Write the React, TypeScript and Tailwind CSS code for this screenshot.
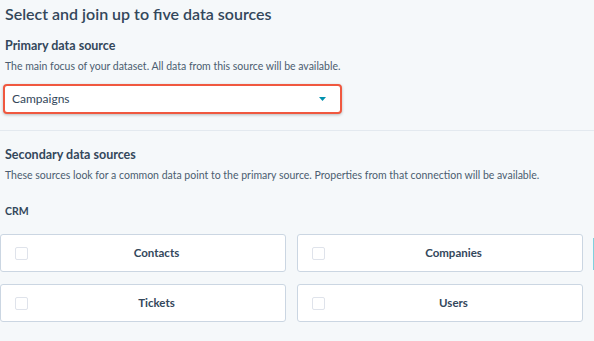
import React from 'react';

const crmSources = ['Contacts', 'Companies', 'Tickets', 'Users'];

const SourceCard: React.FC<{ label: string }> = ({ label }) => (
  <div className="flex h-[38px] items-center rounded-[3px] border border-[#cbd6e2] bg-white pl-[14px]">
    <span className="h-[13px] w-[13px] shrink-0 rounded-[2px] border border-[#dfe3eb] bg-white" />
    <span className="flex-1 text-center text-[11.5px] font-bold text-[#33475b]">{label}</span>
  </div>
);

export default function App() {
  return (
    <div
      className="h-[341px] w-[594px] overflow-hidden bg-[#f5f8fa] text-[#33475b]"
      style={{ fontFamily: 'Lato, "Open Sans", sans-serif' }}
    >
      <div className="px-[5px] pt-[3px]">
        <h1 className="text-[16px] font-semibold leading-[22px]">Select and join up to five data sources</h1>
        <h2 className="mt-[13px] text-[12.5px] font-bold leading-[16px]">Primary data source</h2>
        <p className="mt-[6px] text-[10.5px] leading-[13px] text-[#4b5d70]">
          The main focus of your dataset. All data from this source will be available.
        </p>
      </div>

      <div className="ml-[3px] mt-[11px] flex h-[30px] w-[339px] items-center justify-between rounded-[4px] border-[2.5px] border-[#f0583f] bg-white pl-[7px] pr-[14px] shadow-[0_1px_3px_rgba(0,0,0,0.25)]">
        <span className="text-[12px] text-[#33475b]">Campaigns</span>
        <svg width="7" height="4" viewBox="0 0 7 4">
          <path d="M0 0 L7 0 L3.5 4 Z" fill="#0091ae" />
        </svg>
      </div>

      <div className="mt-[16px] h-px w-full bg-[#e3e9ef]" />

      <div className="px-[5px] pt-[16px]">
        <h2 className="text-[12.5px] font-bold leading-[16px]">Secondary data sources</h2>
        <p className="mt-[6px] text-[10.5px] leading-[13px] text-[#4b5d70]">
          These sources look for a common data point to the primary source. Properties from that connection will be
          available.
        </p>
        <h3 className="mt-[23px] text-[10.5px] font-bold leading-[12px]">CRM</h3>
      </div>

      <div className="relative mt-[17px] grid w-[583px] grid-cols-2 gap-x-[11px] gap-y-[12px]">
        {crmSources.map((s) => (
          <SourceCard key={s} label={s} />
        ))}
        <div className="absolute left-[593px] top-[4px] h-[32px] w-[3px] bg-[#7fd1de]" />
      </div>
    </div>
  );
}
